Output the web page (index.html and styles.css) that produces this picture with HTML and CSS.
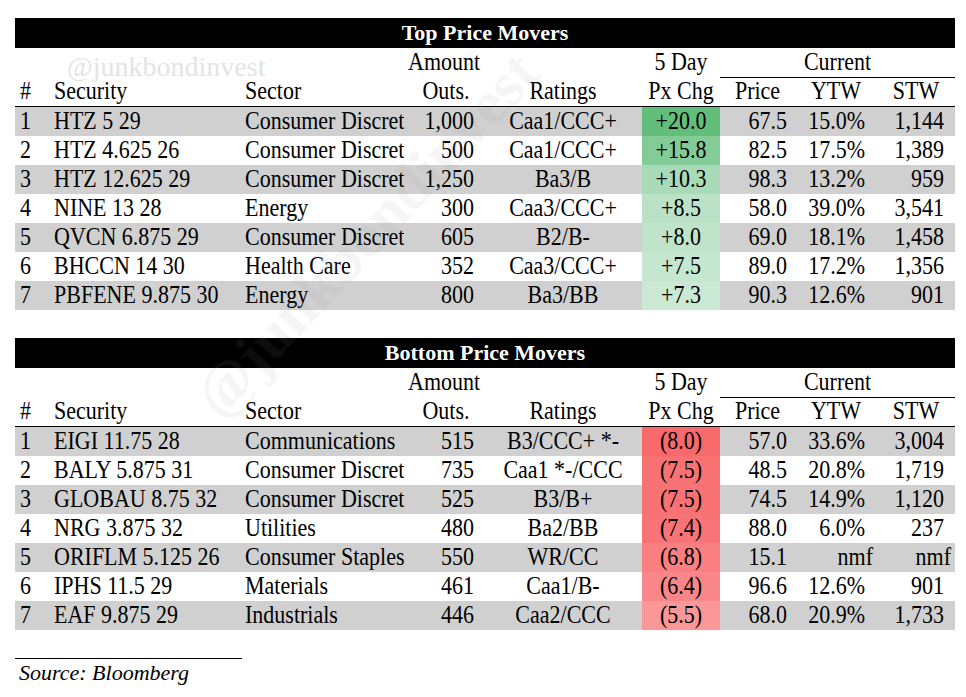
FILE: index.html
```html
<!DOCTYPE html>
<html>
<head>
<meta charset="utf-8">
<link rel="stylesheet" href="styles.css">
</head>
<body>
<div class="sheet">
  <section class="movers">
    <div class="title">Top Price Movers</div>
    <div class="row h1"><span class="o">Amount</span><span class="c"><span>5 Day</span></span><span class="cur"><span>Current</span></span></div>
    <div class="row h2"><span class="n">#</span><span class="s">Security</span><span class="sec">Sector</span><span class="o">Outs.</span><span class="r">Ratings</span><span class="c"><span>Px Chg</span></span><span class="pc">Price</span><span class="yc">YTW</span><span class="wc">STW</span></div>
    <div class="row g"><span class="n">1</span><span class="s">HTZ 5 29</span><span class="sec">Consumer Discret</span><span class="o">1,000</span><span class="r">Caa1/CCC+</span><span class="c" style="background:#63be7b"><span>+20.0</span></span><span class="p">67.5</span><span class="y">15.0%</span><span class="w">1,144</span></div>
    <div class="row"><span class="n">2</span><span class="s">HTZ 4.625 26</span><span class="sec">Consumer Discret</span><span class="o">500</span><span class="r">Caa1/CCC+</span><span class="c" style="background:#83cb97"><span>+15.8</span></span><span class="p">82.5</span><span class="y">17.5%</span><span class="w">1,389</span></div>
    <div class="row g"><span class="n">3</span><span class="s">HTZ 12.625 29</span><span class="sec">Consumer Discret</span><span class="o">1,250</span><span class="r">Ba3/B</span><span class="c" style="background:#aadbb8"><span>+10.3</span></span><span class="p">98.3</span><span class="y">13.2%</span><span class="w">959</span></div>
    <div class="row"><span class="n">4</span><span class="s">NINE 13 28</span><span class="sec">Energy</span><span class="o">300</span><span class="r">Caa3/CCC+</span><span class="c" style="background:#bbe2c7"><span>+8.5</span></span><span class="p">58.0</span><span class="y">39.0%</span><span class="w">3,541</span></div>
    <div class="row g"><span class="n">5</span><span class="s">QVCN 6.875 29</span><span class="sec">Consumer Discret</span><span class="o">605</span><span class="r">B2/B-</span><span class="c" style="background:#bfe4ca"><span>+8.0</span></span><span class="p">69.0</span><span class="y">18.1%</span><span class="w">1,458</span></div>
    <div class="row"><span class="n">6</span><span class="s">BHCCN 14 30</span><span class="sec">Health Care</span><span class="o">352</span><span class="r">Caa3/CCC+</span><span class="c" style="background:#c5e6cf"><span>+7.5</span></span><span class="p">89.0</span><span class="y">17.2%</span><span class="w">1,356</span></div>
    <div class="row g"><span class="n">7</span><span class="s">PBFENE 9.875 30</span><span class="sec">Energy</span><span class="o">800</span><span class="r">Ba3/BB</span><span class="c" style="background:#cae8d3"><span>+7.3</span></span><span class="p">90.3</span><span class="y">12.6%</span><span class="w">901</span></div>
  </section>

  <section class="movers">
    <div class="title">Bottom Price Movers</div>
    <div class="row h1"><span class="o">Amount</span><span class="c"><span>5 Day</span></span><span class="cur"><span>Current</span></span></div>
    <div class="row h2"><span class="n">#</span><span class="s">Security</span><span class="sec">Sector</span><span class="o">Outs.</span><span class="r">Ratings</span><span class="c"><span>Px Chg</span></span><span class="pc">Price</span><span class="yc">YTW</span><span class="wc">STW</span></div>
    <div class="row g"><span class="n">1</span><span class="s">EIGI 11.75 28</span><span class="sec">Communications</span><span class="o">515</span><span class="r">B3/CCC+ *-</span><span class="c" style="background:#f8696b"><span>(8.0)</span></span><span class="p">57.0</span><span class="y">33.6%</span><span class="w">3,004</span></div>
    <div class="row"><span class="n">2</span><span class="s">BALY 5.875 31</span><span class="sec">Consumer Discret</span><span class="o">735</span><span class="r">Caa1 *-/CCC</span><span class="c" style="background:#f87274"><span>(7.5)</span></span><span class="p">48.5</span><span class="y">20.8%</span><span class="w">1,719</span></div>
    <div class="row g"><span class="n">3</span><span class="s">GLOBAU 8.75 32</span><span class="sec">Consumer Discret</span><span class="o">525</span><span class="r">B3/B+</span><span class="c" style="background:#f87274"><span>(7.5)</span></span><span class="p">74.5</span><span class="y">14.9%</span><span class="w">1,120</span></div>
    <div class="row"><span class="n">4</span><span class="s">NRG 3.875 32</span><span class="sec">Utilities</span><span class="o">480</span><span class="r">Ba2/BB</span><span class="c" style="background:#f87476"><span>(7.4)</span></span><span class="p">88.0</span><span class="y">6.0%</span><span class="w">237</span></div>
    <div class="row g"><span class="n">5</span><span class="s">ORIFLM 5.125 26</span><span class="sec">Consumer Staples</span><span class="o">550</span><span class="r">WR/CC</span><span class="c" style="background:#f97f81"><span>(6.8)</span></span><span class="p">15.1</span><span class="y t">nmf</span><span class="w t">nmf</span></div>
    <div class="row"><span class="n">6</span><span class="s">IPHS 11.5 29</span><span class="sec">Materials</span><span class="o">461</span><span class="r">Caa1/B-</span><span class="c" style="background:#f98689"><span>(6.4)</span></span><span class="p">96.6</span><span class="y">12.6%</span><span class="w">901</span></div>
    <div class="row g"><span class="n">7</span><span class="s">EAF 9.875 29</span><span class="sec">Industrials</span><span class="o">446</span><span class="r">Caa2/CCC</span><span class="c" style="background:#f99799"><span>(5.5)</span></span><span class="p">68.0</span><span class="y">20.9%</span><span class="w">1,733</span></div>
  </section>

  <footer class="source">Source: Bloomberg</footer>

  <div class="wm-small">@junkbondinvest</div>
  <div class="wm-big">@junkbondinvest</div>
</div>
</body>
</html>
```

FILE: styles.css
```css
html, body {
  margin: 0;
  padding: 0;
  background: #ffffff;
}

body {
  font-family: "Liberation Serif", "Times New Roman", serif;
  color: #000000;
  font-size: 22px;
}

.sheet {
  position: relative;
  width: 940px;
  padding: 18px 11px 0 15px;
  height: 679px;
  overflow: hidden;
}

.movers {
  display: flex;
  flex-direction: column;
  margin-bottom: 28px;
}

.title {
  height: 30px;
  line-height: 30px;
  background: #000000;
  color: #ffffff;
  font-weight: bold;
  text-align: center;
}

.row {
  display: grid;
  grid-template-columns: 35px 191px 167px 76px 158px 78px 75px 82px 78px;
  height: 29px;
  line-height: 29px;
  white-space: nowrap;
}

.row.g {
  background: #d0d0d0;
}

.row > span:not(.c):not(.cur),
.row > .c > span,
.row > .cur > span {
  display: block;
  transform: translateY(-1px) scaleY(1.13);
}

.row.h1 {
  height: 30px;
}

.row.h2 {
  height: 28px;
  line-height: 28px;
  border-bottom: 1px solid #000000;
}

.h1 .o { grid-column: 4; text-align: center; }
.h1 .c { grid-column: 6; }
.h1 .cur {
  grid-column: 7 / span 3;
  text-align: center;
  height: 29px;
  line-height: 29px;
  border-bottom: 1px solid #000000;
}

.n { padding-left: 5px; }
.s { padding-left: 4px; }
.sec { padding-left: 4px; }
.o { text-align: right; padding-right: 10px; }
.h2 .o { text-align: center; padding-right: 0; }
.r { text-align: center; }
.c { text-align: center; }
.c > span { display: block; }
.p { text-align: right; padding-right: 8px; }
.y { text-align: right; padding-right: 12px; }
.w { text-align: right; padding-right: 11px; }
.y.t, .w.t { padding-right: 4px; }
.pc, .yc, .wc { text-align: center; }

.source {
  width: 227px;
  border-top: 1px solid #000000;
  font-style: italic;
  padding: 0 0 0 4px;
  box-sizing: border-box;
  line-height: 28px;
}

.wm-small {
  position: absolute;
  left: 67px;
  top: 57px;
  font-size: 28px;
  line-height: 20px;
  color: #e4e4e4;
  white-space: nowrap;
  pointer-events: none;
}

.wm-big {
  position: absolute;
  left: 366px;
  top: 234px;
  font-size: 62px;
  font-weight: bold;
  line-height: 62px;
  color: rgba(140, 140, 140, 0.09);
  white-space: nowrap;
  transform: translate(-50%, -50%) rotate(-47deg);
  pointer-events: none;
}
```
